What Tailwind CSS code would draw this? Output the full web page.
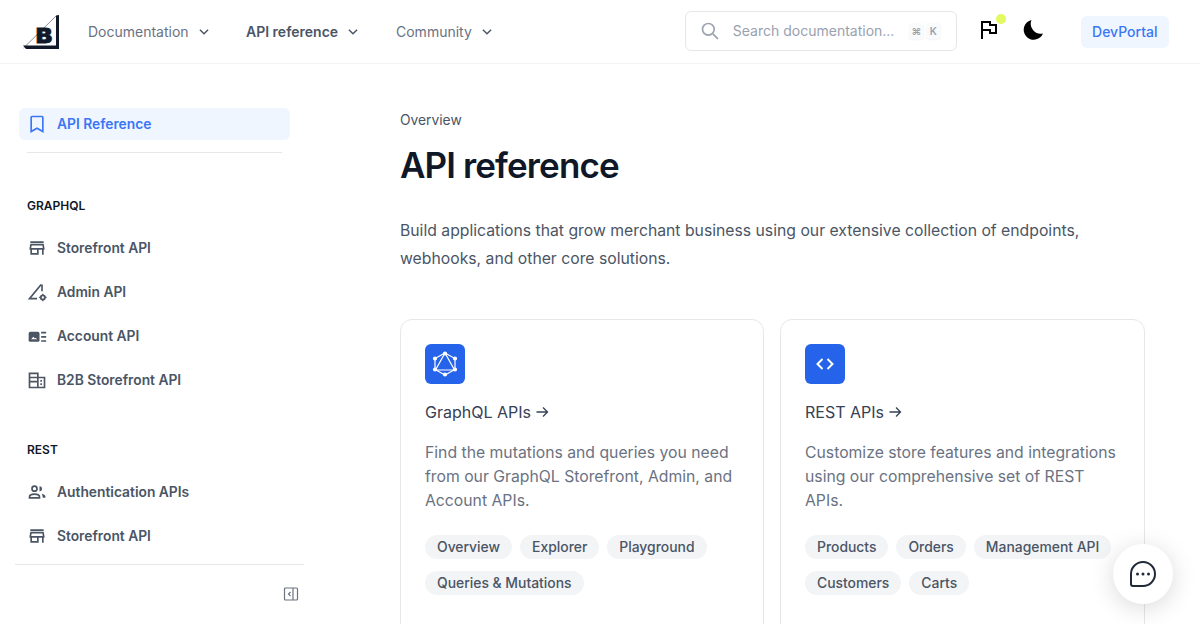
<!DOCTYPE html>
<html lang="en">
<head>
<meta charset="utf-8">
<title>API reference</title>
<script src="https://cdn.jsdelivr.net/npm/@tailwindcss/browser@4"></script>
</head>
<body class="h-[624px] overflow-hidden bg-white font-['Inter','Liberation_Sans',sans-serif] text-gray-600">
  <!-- top bar -->
  <header class="flex h-16 items-center border-b border-gray-100 pl-[23px]">
    <svg class="h-[34px] w-9 shrink-0" viewBox="0 0 36 34">
      <path d="M0.500 33 L33 1" fill="none" stroke="#6b7280" stroke-width="0.800"/>
      <path d="M33 0.500 L36 0 V34 H3 L0 30.500 H33 Z" fill="#111827"/>
      <text x="13" y="28" font-size="20" font-weight="900" stroke="#111827" stroke-width="0.800" fill="#111827" font-family="Inter" textLength="16" lengthAdjust="spacingAndGlyphs">B</text>
    </svg>
    <nav class="ml-[29px] flex items-center text-sm">
      <a class="flex w-[158px] items-center text-gray-500">Documentation
        <svg class="ml-2 h-3.5 w-3.5" viewBox="0 0 24 24" fill="none" stroke="#4b5563" stroke-width="2.500"><path d="m5 8 7 7 7-7"/></svg></a>
      <a class="flex w-[150px] items-center font-semibold text-gray-600">API reference
        <svg class="ml-2 h-3.5 w-3.5" viewBox="0 0 24 24" fill="none" stroke="#4b5563" stroke-width="2.500"><path d="m5 8 7 7 7-7"/></svg></a>
      <a class="flex items-center text-gray-500">Community
        <svg class="ml-2 h-3.5 w-3.5" viewBox="0 0 24 24" fill="none" stroke="#4b5563" stroke-width="2.500"><path d="m5 8 7 7 7-7"/></svg></a>
    </nav>
    <div class="mb-px ml-[191px] flex h-10 w-[272px] items-center rounded-md border border-gray-200 pl-[14px] pr-[15px] text-sm text-gray-400">
      <svg class="h-5 w-5 shrink-0" viewBox="0 0 24 24" fill="none" stroke="#9ca3af" stroke-width="2"><circle cx="10" cy="10" r="7"/><path d="m15.500 15.500 6 6"/></svg>
      <span class="ml-[13px]">Search documentation...</span>
      <span class="ml-auto flex gap-0.5 text-[10px] font-semibold text-gray-400">
        <kbd class="flex h-4 w-[15px] items-center justify-center rounded bg-gray-50 font-['Inter'] shadow-[0_1px_2px_rgba(0,0,0,0.05)]">⌘</kbd>
        <kbd class="flex h-4 w-[15px] items-center justify-center rounded bg-gray-50 font-['Inter'] shadow-[0_1px_2px_rgba(0,0,0,0.05)]">K</kbd>
      </span>
    </div>
    <div class="relative mb-[3px] ml-[22px] h-6 w-6">
      <svg class="h-6 w-6" viewBox="0 0 24 24" fill="none" stroke="#000" stroke-width="2"><path d="M3 21 V4 H11 V7 H17 V15 H11 V12 H3"/></svg>
      <span class="absolute -top-[4px] left-[17px] h-2.5 w-2.5 rounded-full bg-[#e4f85f]"></span>
    </div>
    <svg class="mb-[3px] ml-[18px] h-6 w-6" viewBox="0 0 24 24" fill="#000"><path d="M10.500 2a10 10 0 1 0 11.500 13.500 A10 10 0 0 1 10.500 2Z"/></svg>
    <a class="ml-9 mt-px flex h-8 w-[88px] items-center justify-center rounded-md bg-blue-50 text-sm font-medium text-[#3b76f6]">DevPortal</a>
  </header>

  <div class="flex h-[560px]">
    <!-- sidebar -->
    <aside class="relative flex w-[304px] shrink-0 flex-col pl-[19px] pr-[14px] pt-11 text-[13.8px] font-semibold text-gray-600">
      <a class="flex h-8 items-center gap-[10px] rounded-md bg-blue-50 px-2 text-[#3b76f6]">
        <svg class="h-5 w-5" viewBox="0 0 24 24" fill="none" stroke="currentColor" stroke-width="2"><path d="M6 3h12a1 1 0 0 1 1 1v17l-7-4-7 4V4a1 1 0 0 1 1-1Z"/></svg>
        API Reference
      </a>
      <div class="mx-2 mt-3 border-t border-gray-200"></div>

      <h4 class="ml-2 mt-[45px] text-xs font-semibold text-gray-900">GRAPHQL</h4>
      <ul class="ml-2 mt-3">
        <li class="flex h-11 items-center gap-[10px]">
          <svg class="h-5 w-5" viewBox="0 0 24 24" fill="#4b5563"><path d="M18.360 9l.6 3H5.040l.6-3h12.720M20 4H4v2h16V4zm0 3H4l-1 5v2h1v6h10v-6h4v6h2v-6h1v-2l-1-5zM6 18v-4h6v4H6z"/></svg>
          Storefront API</li>
        <li class="flex h-11 items-center gap-[10px]">
          <svg class="h-5 w-5" viewBox="0 0 24 24" fill="none" stroke="#4b5563" stroke-width="2"><path d="M17 3 3 20h9"/><path d="M18 3v8"/><circle cx="19" cy="18.500" r="2.500" stroke-width="2.200"/><path d="M19 14v1.500M19 21.500V23M14.500 18.500H16M22 18.500h1.500" stroke-width="1.500"/></svg>
          Admin API</li>
        <li class="flex h-11 items-center gap-[10px]">
          <svg class="h-5 w-5" viewBox="0 0 24 24" fill="#4b5563"><rect x="2" y="7" width="13" height="12" rx="2"/><path d="M17 7h6v2h-6zM17 12h6v2h-6zM17 17h6v2h-6z"/><path d="M5 16l2.500-3 2 2 1-1 1.500 2Z" fill="#fff"/></svg>
          Account API</li>
        <li class="flex h-11 items-center gap-[10px]">
          <svg class="h-5 w-5" viewBox="0 0 24 24" fill="none" stroke="#4b5563" stroke-width="2"><path d="M3 21V4h10v17M13 9h8v12H2M3 9h10M3 14h10M16 13h2M16 17h2"/></svg>
          B2B Storefront API</li>
      </ul>

      <h4 class="ml-2 mt-10 text-xs font-semibold text-gray-900">REST</h4>
      <ul class="ml-2 mt-3">
        <li class="flex h-11 items-center gap-[10px]">
          <svg class="h-5 w-5" viewBox="0 0 24 24" fill="none" stroke="#4b5563" stroke-width="2"><circle cx="9" cy="8" r="3"/><path d="M3 19v-1c0-2.500 3.500-3.500 6-3.500s6 1 6 3.500v1Z"/><path d="M15 5a3 3 0 0 1 0 6Z" fill="#4b5563" stroke="none"/><path d="M18 14c2 .5 4 1.500 4 3v2h-3Z" fill="#4b5563" stroke="none"/></svg>
          Authentication APIs</li>
        <li class="flex h-11 items-center gap-[10px]">
          <svg class="h-5 w-5" viewBox="0 0 24 24" fill="#4b5563"><path d="M18.360 9l.6 3H5.040l.6-3h12.720M20 4H4v2h16V4zm0 3H4l-1 5v2h1v6h10v-6h4v6h2v-6h1v-2l-1-5zM6 18v-4h6v4H6z"/></svg>
          Storefront API</li>
      </ul>

      <div class="absolute bottom-0 left-[15px] right-0 flex h-[60px] items-center justify-end border-t border-gray-200 pb-px pr-[5px]">
        <svg class="h-4 w-4" viewBox="0 0 16 16" fill="none" stroke="#6b7280" stroke-width="1.200"><rect x="1.500" y="2" width="13" height="12" rx="1"/><path d="M10 2v12"/><path d="M7.500 6 5.500 8l2 2"/></svg>
      </div>
    </aside>

    <!-- main -->
    <main class="ml-[96px] w-[745px] pt-[46px]">
      <p class="text-[13.8px] leading-5 text-gray-600">Overview</p>
      <h1 class="mt-[15px] text-[35px] font-semibold leading-10 tracking-tight text-gray-900">API reference</h1>
      <p class="mt-8 text-[15.75px] leading-7 text-gray-600">Build applications that grow merchant business using our extensive collection of endpoints, webhooks, and other core solutions.</p>

      <div class="mt-[46px] grid grid-cols-[364px_365px] gap-4">
        <article class="h-[400px] rounded-xl border border-gray-200 p-6">
          <div class="flex h-10 w-10 items-center justify-center rounded-md bg-[#2563eb]">
            <svg class="h-7 w-7" viewBox="0 0 28 28" fill="none" stroke="#fff" stroke-width="1.200"><path d="M14 3 24 8.500V19.500L14 25 4 19.500V8.500Z"/><path d="M14 3 23.500 20H4.500Z"/><g fill="#fff"><circle cx="14" cy="3.500" r="1.500"/><circle cx="24" cy="8.500" r="1.500"/><circle cx="24" cy="19.500" r="1.500"/><circle cx="14" cy="24.500" r="1.500"/><circle cx="4" cy="19.500" r="1.500"/><circle cx="4" cy="8.500" r="1.500"/></g></svg>
          </div>
          <h3 class="mt-4 flex items-center gap-1 text-base leading-6 text-gray-700">GraphQL APIs
            <svg class="h-3.5 w-3.5" viewBox="0 0 14 14" fill="none" stroke="currentColor" stroke-width="1.300"><path d="M1.500 7h11M8 2.500 12.500 7 8 11.500"/></svg></h3>
          <p class="mt-[17px] text-[15.75px] leading-6 text-gray-500">Find the mutations and queries you need from our GraphQL Storefront, Admin, and Account APIs.</p>
          <div class="mt-[22px] flex flex-wrap gap-x-2 gap-y-3 text-[13.9px] font-medium text-gray-600">
            <span class="flex h-6 items-center rounded-full bg-gray-100 px-3">Overview</span>
            <span class="flex h-6 items-center rounded-full bg-gray-100 px-3">Explorer</span>
            <span class="flex h-6 items-center rounded-full bg-gray-100 px-3">Playground</span>
            <span class="flex h-6 items-center rounded-full bg-gray-100 px-3">Queries &amp; Mutations</span>
          </div>
        </article>
        <article class="h-[400px] rounded-xl border border-gray-200 p-6">
          <div class="flex h-10 w-10 items-center justify-center rounded-md bg-[#2563eb]">
            <svg class="h-6 w-6" viewBox="0 0 24 24" fill="none" stroke="#fff" stroke-width="2"><path d="m9.500 7-5 5 5 5M14.500 7l5 5-5 5"/></svg>
          </div>
          <h3 class="mt-4 flex items-center gap-1 text-base leading-6 text-gray-700">REST APIs
            <svg class="h-3.5 w-3.5" viewBox="0 0 14 14" fill="none" stroke="currentColor" stroke-width="1.300"><path d="M1.500 7h11M8 2.500 12.500 7 8 11.500"/></svg></h3>
          <p class="mt-[17px] text-[15.75px] leading-6 text-gray-500">Customize store features and integrations using our comprehensive set of REST APIs.</p>
          <div class="mt-[22px] flex flex-wrap gap-x-2 gap-y-3 text-[13.9px] font-medium text-gray-600">
            <span class="flex h-6 items-center rounded-full bg-gray-100 px-3">Products</span>
            <span class="flex h-6 items-center rounded-full bg-gray-100 px-3">Orders</span>
            <span class="flex h-6 items-center rounded-full bg-gray-100 px-3">Management API</span>
            <span class="flex h-6 items-center rounded-full bg-gray-100 px-3">Customers</span>
            <span class="flex h-6 items-center rounded-full bg-gray-100 px-3">Carts</span>
          </div>
        </article>
      </div>
    </main>
  </div>

  <!-- chat bubble -->
  <button class="fixed bottom-5 left-[1113px] flex h-[60px] w-[60px] items-center justify-center rounded-full bg-white shadow-[0_4px_24px_rgba(0,0,0,0.15)]">
    <svg class="h-7 w-7" viewBox="0 0 28 28" fill="none" stroke="#1f2937" stroke-width="2"><path d="M14 2a12 12 0 0 1 0 24H4a2 2 0 0 1-2-2V14A12 12 0 0 1 14 2Z"/><g fill="#1f2937" stroke="none"><circle cx="8.500" cy="14" r="1.500"/><circle cx="14" cy="14" r="1.500"/><circle cx="19.500" cy="14" r="1.500"/></g></svg>
  </button>
</body>
</html>
